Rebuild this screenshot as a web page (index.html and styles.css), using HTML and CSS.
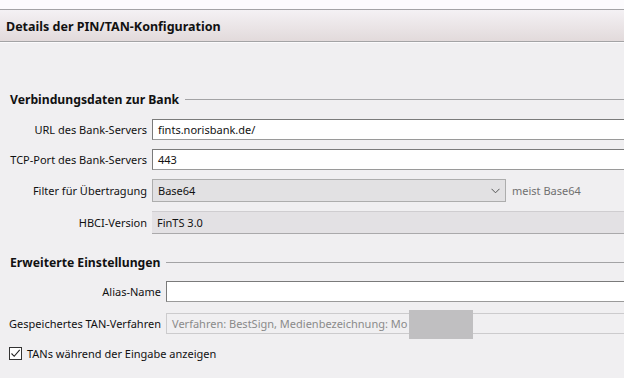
FILE: index.html
```html
<!DOCTYPE html>
<html lang="de">
<head>
    <meta charset="UTF-8">
    <title>Details der PIN/TAN-Konfiguration</title>
    <link rel="stylesheet" href="styles.css">
</head>
<body>
    <div class="topstrip"></div>
    <div class="header">Details der PIN/TAN-Konfiguration</div>

    <div class="content">
        <div class="group bank">
            <div class="group-title"><span>Verbindungsdaten zur Bank</span></div>
            <div class="rows">
                <label class="lbl">URL des Bank-Servers</label>
                <div class="field text">fints.norisbank.de/</div>

                <label class="lbl">TCP-Port des Bank-Servers</label>
                <div class="field text">443</div>

                <label class="lbl">Filter für Übertragung</label>
                <div class="select-line">
                    <div class="field select">
                        <span>Base64</span>
                        <svg class="chevron" width="9" height="6" viewBox="0 0 9 6"><path d="M0.5 0.8 L4.5 4.8 L8.5 0.8" fill="none" stroke="#555" stroke-width="1"/></svg>
                    </div>
                    <span class="hint">meist Base64</span>
                </div>

                <label class="lbl">HBCI-Version</label>
                <div class="field readonly">FinTS 3.0</div>
            </div>
        </div>

        <div class="group extra">
            <div class="group-title"><span>Erweiterte Einstellungen</span></div>
            <div class="rows">
                <label class="lbl">Alias-Name</label>
                <div class="field text"></div>

                <label class="lbl">Gespeichertes TAN-Verfahren</label>
                <div class="field disabled">
                    Verfahren: BestSign, Medienbezeichnung: Mo
                    <div class="mask"></div>
                </div>
            </div>
            <label class="check">
                <span class="box">
                    <svg width="11" height="11" viewBox="0 0 11 11"><path d="M1.5 5.5 L4.2 8.3 L9.7 1.8" fill="none" stroke="#222" stroke-width="1.1"/></svg>
                </span>
                TANs während der Eingabe anzeigen
            </label>
        </div>
    </div>
</body>
</html>
```

FILE: styles.css
```css
body {
    margin: 0;
    padding: 0;
    background-color: #f0eff1;
    font-family: "Noto Sans", "Open Sans", sans-serif;
    font-size: 11px;
    color: #111;
    overflow: hidden;
    width: 624px;
    height: 378px;
}
.topstrip {
    height: 9px;
    background: #fcfbfd;
    border-bottom: 1px solid #a3a3a5;
}
.header {
    height: 31px;
    line-height: 33px;
    padding-left: 6px;
    font-weight: bold;
    font-size: 12.5px;
    color: #111;
    background: linear-gradient(#f4f1f4, #e2dadb);
    border-bottom: 1px solid #a3a3a5;
    box-shadow: 0 1px 0 #fbfafc;
}
.content {
    padding-top: 48px;
    margin-right: -30px;
}
.group-title {
    display: flex;
    align-items: center;
    gap: 6px;
    padding-left: 10px;
    font-weight: bold;
    font-size: 12.2px;
    height: 18px;
    color: #111;
}
.group-title::after {
    content: "";
    flex: 1;
    border-top: 1px solid #a3a3a5;
    margin-top: 1px;
}
.rows {
    display: grid;
    align-items: center;
    column-gap: 5px;
}
.bank .rows {
    grid-template-columns: 147px 1fr;
    row-gap: 9px;
    margin-top: 11px;
}
.extra {
    margin-top: 19px;
}
.extra .rows {
    grid-template-columns: 161px 1fr;
    row-gap: 11px;
    margin-top: 10px;
}
.lbl {
    text-align: right;
    white-space: nowrap;
}
.field {
    height: 19px;
    line-height: 19px;
    padding-left: 5px;
    white-space: nowrap;
}
.text {
    background: #fff;
    border: 1px solid #7a7a7a;
    border-bottom-color: #9a9a9a;
}
.select-line {
    display: flex;
    align-items: center;
    gap: 6px;
}
.select {
    width: 347px;
    height: 21px;
    line-height: 21px;
    background: #e2e1e3;
    border: 1px solid #adadad;
    display: flex;
    justify-content: space-between;
    align-items: center;
}
.chevron {
    margin-right: 5px;
}
.hint {
    color: #707070;
}
.readonly {
    height: 21px;
    line-height: 21px;
    background: #e3e1e4;
    border-top: 1px solid #cfcdd0;
    border-bottom: 1px solid #aaa9ab;
}
.disabled {
    position: relative;
    color: #8a8a8a;
    border: 1px solid #cccbcd;
    background: #f0eff1;
}
.mask {
    position: absolute;
    left: 242px;
    top: -4px;
    width: 64px;
    height: 29px;
    background: #c0bfc1;
}
.check {
    display: flex;
    align-items: center;
    gap: 5px;
    height: 13px;
    margin: 13px 0 0 9px;
}
.box {
    width: 11px;
    height: 11px;
    border: 1px solid #333;
    background: #fff;
    display: flex;
}
```
